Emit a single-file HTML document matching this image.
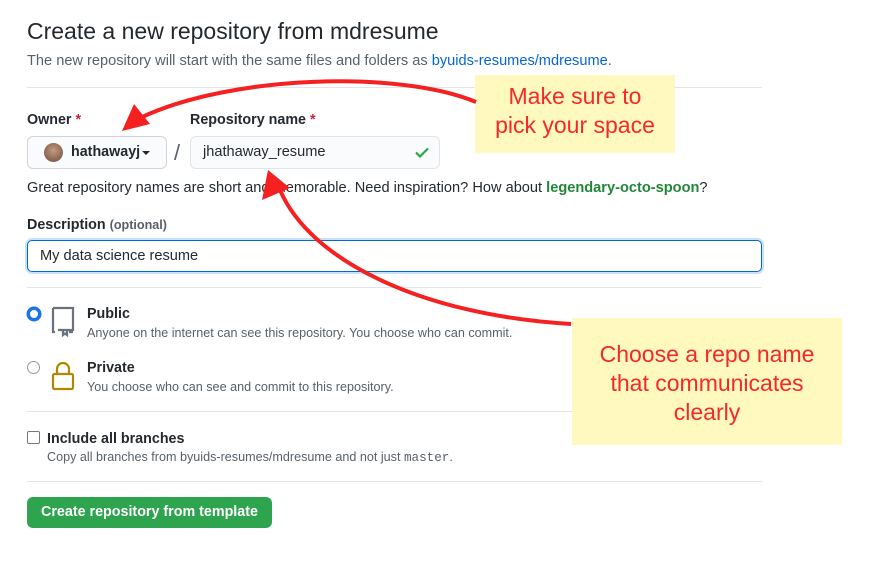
<!DOCTYPE html>
<html><head><style>
body{margin:0;width:878px;height:566px;background:#fff;font-family:"Liberation Sans",sans-serif;color:#24292e;position:relative;overflow:hidden}
.a{position:absolute;white-space:nowrap}
.b{font-weight:bold;font-size:14.3px}
.s{font-size:12.6px;color:#586069}
.hr{position:absolute;left:27px;width:735px;height:1px;background:#e1e4e8}
.note{position:absolute;background:#fff9bf;color:#f5282a;font-size:23px;text-align:center;line-height:29px}
</style></head><body>
<div class="a" style="left:27px;top:18px;font-size:23px">Create a new repository from mdresume</div>
<div class="a" style="left:27px;top:53px;font-size:14.6px;color:#586069">The new repository will start with the same files and folders as <span style="color:#0366d6">byuids-resumes/mdresume</span>.</div>
<div class="hr" style="top:87px"></div>
<div class="a b" style="left:27px;top:112px">Owner <span style="color:#cb2431">*</span></div>
<div class="a b" style="left:190px;top:112px">Repository name <span style="color:#cb2431">*</span></div>
<div class="a" style="left:27px;top:136px;width:138px;height:31px;border:1px solid #d1d5da;border-radius:6px;background:#fafbfc"></div>
<div class="a" style="left:44px;top:143px;width:19px;height:19px;border-radius:50%;background:radial-gradient(circle at 50% 40%,#c49a80,#6b4a3a)"></div>
<div class="a b" style="left:71px;top:144px;font-weight:600">hathawayj</div>
<div class="a" style="left:142px;top:151px;border:4px solid transparent;border-top-color:#24292e;border-bottom:0"></div>
<div class="a" style="left:174px;top:140px;font-size:22px;color:#586069">/</div>
<div class="a" style="left:190px;top:136px;width:248px;height:31px;border:1px solid #e1e4e8;border-radius:6px;background:#fafbfc"></div>
<div class="a" style="left:203px;top:144px;font-size:14.6px">jhathaway_resume</div>
<svg class="a" style="left:414px;top:144px" width="16" height="16"><path d="M2 8.5l4 4 8-8" stroke="#28a745" stroke-width="2.2" fill="none"/></svg>
<div class="a" style="left:27px;top:180px;font-size:14.6px">Great repository names are short and memorable. Need inspiration? How about <b style="color:#22863a">legendary-octo-spoon</b>?</div>
<div class="a b" style="left:27px;top:217px">Description <span style="font-size:12.6px;color:#586069">(optional)</span></div>
<div class="a" style="left:27px;top:240px;width:733px;height:30px;border:1.5px solid #0366d6;border-radius:5px;box-shadow:0 0 0 2px #c8e1ff"></div>
<div class="a" style="left:40px;top:248px;font-size:14.6px">My data science resume</div>
<div class="hr" style="top:287px"></div>
<div class="a" style="left:27px;top:307px;width:8px;height:8px;border-radius:50%;border:3px solid #1a73e8;background:#fff;box-shadow:0 0 0 .5px #1a73e8"></div>
<svg class="a" style="left:50px;top:305px" width="26" height="32"><path d="M3 3h20v22H8M3 3v24h2M13 25v5l2-1.5 2 1.5v-5M19 27h4" stroke="#6a737d" stroke-width="2.2" fill="none"/></svg>
<div class="a b" style="left:87px;top:306px">Public</div>
<div class="a s" style="left:87px;top:326px">Anyone on the internet can see this repository. You choose who can commit.</div>
<div class="a" style="left:27px;top:361px;width:11px;height:11px;border-radius:50%;border:1px solid #999"></div>
<svg class="a" style="left:50px;top:360px" width="26" height="32"><path d="M7 14v-5a6 6 0 0 1 12 0v5" stroke="#b08800" stroke-width="2.2" fill="none"/><rect x="3" y="14" width="20" height="15" rx="1.5" stroke="#b08800" stroke-width="2.2" fill="none"/></svg>
<div class="a b" style="left:87px;top:360px">Private</div>
<div class="a s" style="left:87px;top:380px">You choose who can see and commit to this repository.</div>
<div class="hr" style="top:411px"></div>
<div class="a" style="left:27px;top:431px;width:11px;height:11px;border:1px solid #777;border-radius:2px"></div>
<div class="a b" style="left:47px;top:431px">Include all branches</div>
<div class="a s" style="left:47px;top:450px">Copy all branches from byuids-resumes/mdresume and not just <span style="font-family:'Liberation Mono',monospace">master</span>.</div>
<div class="hr" style="top:481px"></div>
<div class="a" style="left:27px;top:497px;width:245px;height:31px;background:#2ea44f;border-radius:6px;color:#fff;font-weight:bold;font-size:14.3px;line-height:31px;text-align:center">Create repository from template</div>
<div class="note" style="left:475px;top:75px;width:200px;height:78px;padding-top:7px;box-sizing:border-box">Make sure to<br>pick your space</div>
<div class="note" style="left:572px;top:318px;width:270px;height:127px;padding-top:22px;box-sizing:border-box">Choose a repo name<br>that communicates<br>clearly</div>
<svg class="a" style="left:0;top:0" width="878" height="566">
<path d="M476 102 C400 70 230 75 140 118" stroke="#f52020" stroke-width="4" fill="none"/>
<polygon points="122,131 134,104 150,124" fill="#f52020"/>
<path d="M571 324 C420 315 310 260 280 190" stroke="#f52020" stroke-width="4" fill="none"/>
<polygon points="268,170 262,200 290,188" fill="#f52020"/>
</svg>
</body></html>
